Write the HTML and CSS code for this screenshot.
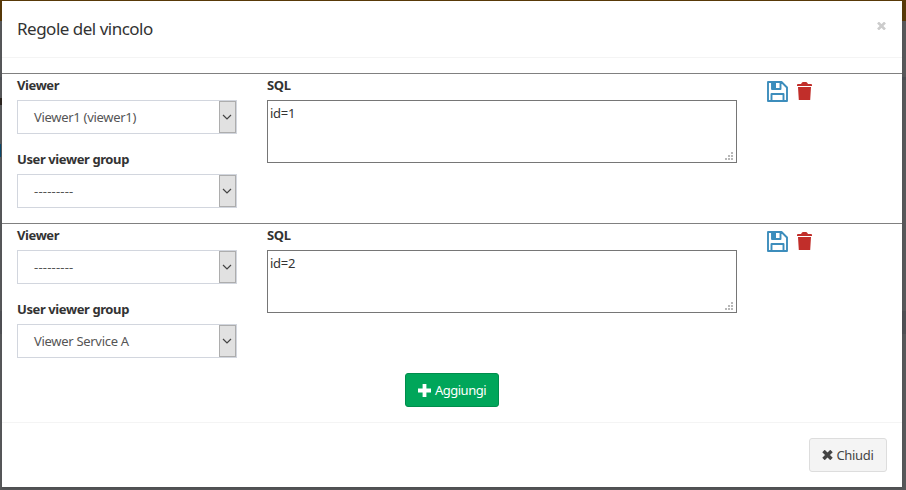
FILE: index.html
```
<!DOCTYPE html>
<html lang="it">
<head>
<meta charset="utf-8">
<title>Regole del vincolo</title>
<link rel="stylesheet" href="styles.css">
</head>
<body>
<svg width="0" height="0" class="symbols" aria-hidden="true">
  <symbol id="chevron" viewBox="0 0 10 6"><path d="M1 1l4 4 4-4" fill="none" stroke="#444" stroke-width="1.2"/></symbol>
  <symbol id="save" viewBox="0 0 21 21"><path d="M1 1h13.5L20 6.500V20H1zM5 1v7h8.500V1M4.500 20v-7h12v7" fill="none" stroke="#3c8dbc" stroke-width="1.9" stroke-linejoin="round"/><path d="M5 1h4v7H5z" fill="#3c8dbc"/></symbol>
  <symbol id="trash" viewBox="0 0 15 18"><path d="M0 4V2.500L1 2h3l1-1.500Q5.300 0 6 0h3q.7 0 1 .5L11 2h3l1 .5V4zM1 5h13l-.8 13H1.800z" fill="#c12e2a"/></symbol>
  <symbol id="grip" viewBox="0 0 8 8"><path d="M6 0h2v2H6zM3 3h2v2H3zM6 3h2v2H6zM0 6h2v2H0zM3 6h2v2H3zM6 6h2v2H6z" fill="#b8b8b8"/></symbol>
</svg>
<div class="modal">
  <header class="modal-header">
    <h4 class="title">Regole del vincolo</h4>
    <button class="close" aria-label="Close"><svg width="9" height="8" viewBox="0 0 9 8"><path d="M1 .5l7 7M8 .5l-7 7" stroke="#ccc" stroke-width="2.6"/></svg></button>
  </header>
  <main class="modal-body">
    <section class="rule">
      <div class="fields">
        <div class="label">Viewer</div>
        <div class="select"><span>Viewer1 (viewer1)</span><i class="arrow"><svg width="10" height="6"><use href="#chevron"/></svg></i></div>
        <div class="label">User viewer group</div>
        <div class="select"><span class="dashes">---------</span><i class="arrow"><svg width="10" height="6"><use href="#chevron"/></svg></i></div>
      </div>
      <div class="query">
        <div class="label">SQL</div>
        <div class="textarea">id=1<svg class="grip" width="8" height="8"><use href="#grip"/></svg></div>
      </div>
      <div class="actions"><svg width="21" height="21"><use href="#save"/></svg><svg width="15" height="18"><use href="#trash"/></svg></div>
    </section>
    <section class="rule">
      <div class="fields">
        <div class="label">Viewer</div>
        <div class="select"><span class="dashes">---------</span><i class="arrow"><svg width="10" height="6"><use href="#chevron"/></svg></i></div>
        <div class="label">User viewer group</div>
        <div class="select"><span>Viewer Service A</span><i class="arrow"><svg width="10" height="6"><use href="#chevron"/></svg></i></div>
      </div>
      <div class="query">
        <div class="label">SQL</div>
        <div class="textarea">id=2<svg class="grip" width="8" height="8"><use href="#grip"/></svg></div>
      </div>
      <div class="actions"><svg width="21" height="21"><use href="#save"/></svg><svg width="15" height="18"><use href="#trash"/></svg></div>
    </section>
    <button class="btn add"><svg width="13" height="13" viewBox="0 0 13 13"><path d="M6.500 0v13M0 6.500h13" stroke="#fff" stroke-width="3.800"/></svg><span>Aggiungi</span></button>
  </main>
  <footer class="modal-footer">
    <button class="btn dismiss"><svg width="11" height="10" viewBox="0 0 11 10"><path d="M1.500 1l8 8M9.500 1l-8 8" stroke="#444" stroke-width="3.500"/></svg><span>Chiudi</span></button>
  </footer>
</div>
</body>
</html>
```
FILE: styles.css
```
* { box-sizing: border-box; }
body {
  margin: 0;
  height: 490px;
  padding: 1px 4px 3px 2px;
  overflow: hidden;
  background:
    linear-gradient(#0b4a6e, #0b4a6e) 0 144px / 1px 13px no-repeat,
    linear-gradient(#2c2520, #2c2520) 0 98px / 2px 7px no-repeat,
    linear-gradient(#593a09 0 21px, #58595b 21px 77px, #4e5056 77px 80px, #58595b 80px 311px, #505155 311px 334px, #58595b 334px);
  font: 13px/20px "Source Sans Pro", "Noto Sans", sans-serif;
  letter-spacing: -0.3px;
  color: #333;
}
.symbols { position: absolute; }
svg { display: block; flex: none; }
button { font: inherit; letter-spacing: inherit; }
.modal {
  height: 486px;
  background: #fff;
  box-shadow: 0 2px 3px rgba(0, 0, 0, .12);
}
.modal-header {
  height: 57px;
  padding: 0 16px 0 15px;
  border-bottom: 1px solid #f4f4f4;
  display: flex;
  justify-content: space-between;
  align-items: flex-start;
}
.title {
  margin: 15px 0 0;
  font-size: 17px;
  line-height: 25px;
  font-weight: 400;
  letter-spacing: -0.5px;
}
.close { margin-top: 21px; padding: 0; border: 0; background: none; }
.modal-body { height: 364px; padding-top: 15px; }
.rule {
  height: 150px;
  border-top: 1px solid #808080;
  padding: 2px 15px 0;
  display: grid;
  grid-template-columns: 220px 470px auto;
  column-gap: 30px;
}
.label { height: 24px; line-height: 18px; font-weight: 700; letter-spacing: -0.4px; }
.select {
  height: 34px;
  margin-bottom: 16px;
  border: 1px solid #d2d6de;
  padding-left: 16px;
  display: flex;
  align-items: center;
  justify-content: space-between;
  color: #555;
}
.dashes { letter-spacing: 0.2px; }
.arrow {
  width: 17px;
  height: 32px;
  padding-left: 2px;
  border: 1px solid #adadad;
  background: #e1e1e1;
  display: flex;
  align-items: center;
}
.textarea {
  position: relative;
  height: 63px;
  border: 1px solid #767676;
  padding: 2px;
}
.grip { position: absolute; right: 3px; bottom: 2px; }
.actions { display: flex; gap: 9px; padding-top: 5px; }
.actions svg + svg { margin-top: 1px; }
.btn {
  height: 34px;
  border: 1px solid;
  border-radius: 3px;
  padding: 0;
  display: flex;
  align-items: center;
  justify-content: center;
}
.add {
  width: 94px;
  margin: 0 0 0 403px;
  gap: 4px;
  color: #fff;
  background: #00a65a;
  border-color: #008d4c;
  letter-spacing: -0.5px;
}
.modal-footer {
  height: 65px;
  border-top: 1px solid #f4f4f4;
  padding: 15px 15px 0;
  display: flex;
  justify-content: flex-end;
}
.dismiss {
  width: 78px;
  gap: 3px;
  color: #444;
  background: #f4f4f4;
  border-color: #ddd;
}
```
